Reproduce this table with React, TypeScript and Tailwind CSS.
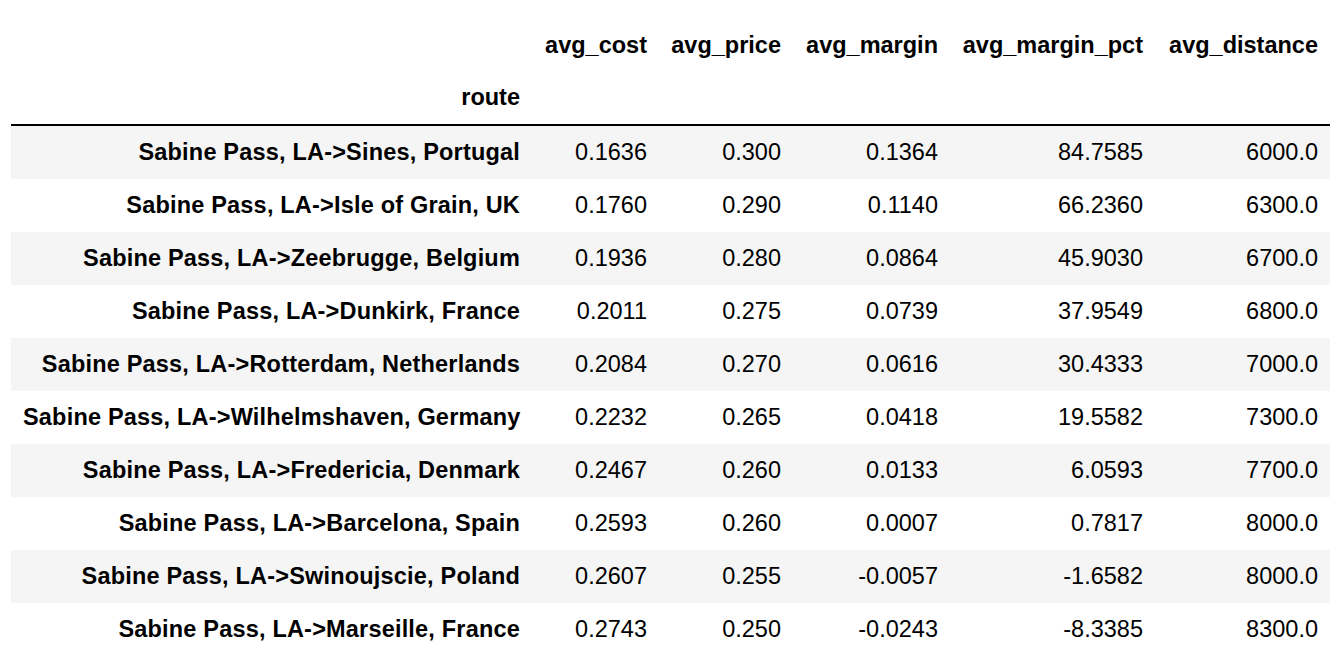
import React from 'react';

const columns = ['avg_cost', 'avg_price', 'avg_margin', 'avg_margin_pct', 'avg_distance'];

const colWidths = ['w-[127px]', 'w-[134px]', 'w-[157px]', 'w-[205px]', 'w-[175px]'];

const rows: [string, string, string, string, string, string][] = [
  ['Sabine Pass, LA->Sines, Portugal', '0.1636', '0.300', '0.1364', '84.7585', '6000.0'],
  ['Sabine Pass, LA->Isle of Grain, UK', '0.1760', '0.290', '0.1140', '66.2360', '6300.0'],
  ['Sabine Pass, LA->Zeebrugge, Belgium', '0.1936', '0.280', '0.0864', '45.9030', '6700.0'],
  ['Sabine Pass, LA->Dunkirk, France', '0.2011', '0.275', '0.0739', '37.9549', '6800.0'],
  ['Sabine Pass, LA->Rotterdam, Netherlands', '0.2084', '0.270', '0.0616', '30.4333', '7000.0'],
  ['Sabine Pass, LA->Wilhelmshaven, Germany', '0.2232', '0.265', '0.0418', '19.5582', '7300.0'],
  ['Sabine Pass, LA->Fredericia, Denmark', '0.2467', '0.260', '0.0133', '6.0593', '7700.0'],
  ['Sabine Pass, LA->Barcelona, Spain', '0.2593', '0.260', '0.0007', '0.7817', '8000.0'],
  ['Sabine Pass, LA->Swinoujscie, Poland', '0.2607', '0.255', '-0.0057', '-1.6582', '8000.0'],
  ['Sabine Pass, LA->Marseille, France', '0.2743', '0.250', '-0.0243', '-8.3385', '8300.0'],
];

export default function App() {
  return (
    <div className="min-h-screen bg-white pt-[19px] pl-[11px] font-['Liberation_Sans',Arial,sans-serif] text-[23.5px] text-black">
      <table className="table-fixed border-separate border-spacing-0 w-[1319px]">
        <thead>
          <tr className="h-[53px]">
            <th className="w-[521px] px-3" />
            {columns.map((col, i) => (
              <th key={col} className={`${colWidths[i]} px-3 text-right font-bold whitespace-nowrap`}>
                {col}
              </th>
            ))}
          </tr>
          <tr className="h-[54px]">
            <th className="px-3 text-right font-bold border-b-2 border-black">route</th>
            {columns.map((col) => (
              <th key={col} className="px-3 border-b-2 border-black" />
            ))}
          </tr>
        </thead>
        <tbody>
          {rows.map((row, i) => (
            <tr key={row[0]} className={`h-[53px] ${i % 2 === 0 ? 'bg-[#f5f5f5]' : 'bg-white'}`}>
              <th className="px-3 text-right font-bold whitespace-nowrap tracking-[0.19px]">{row[0]}</th>
              {row.slice(1).map((value, j) => (
                <td key={j} className="px-3 text-right whitespace-nowrap">
                  {value}
                </td>
              ))}
            </tr>
          ))}
        </tbody>
      </table>
    </div>
  );
}
